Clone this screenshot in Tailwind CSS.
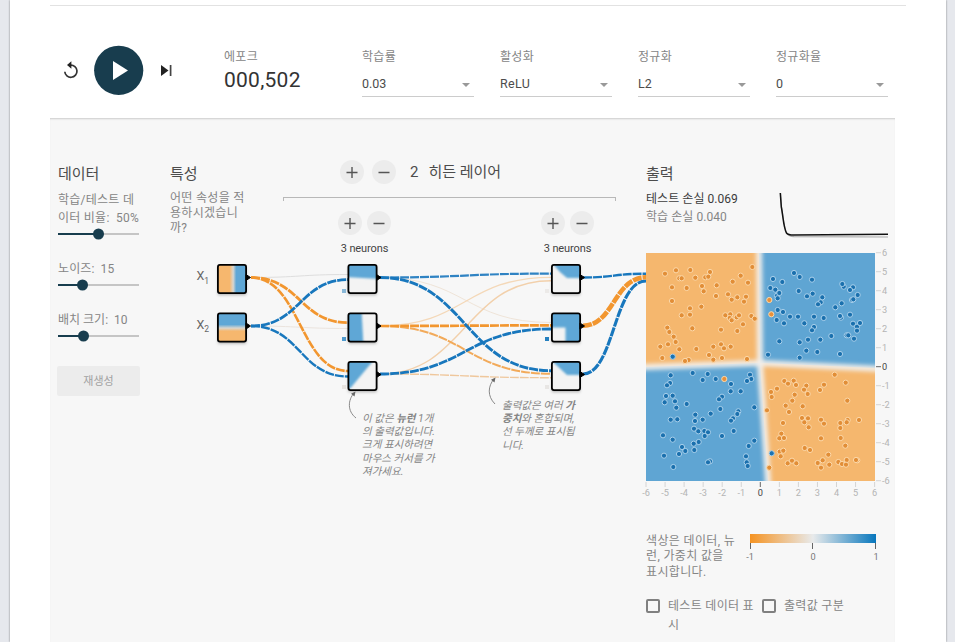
<!DOCTYPE html>
<html lang="ko">
<head>
<meta charset="utf-8">
<title>Neural Network Playground</title>
<script src="https://cdn.jsdelivr.net/npm/@tailwindcss/browser@4"></script>
</head>
<body class="h-[642px] w-[955px] overflow-hidden bg-[#e6e8ed] font-[Roboto,'Noto_Sans_CJK_KR',sans-serif] text-[12px] text-[#858585]">
<div class="ml-[10px] h-[642px] w-[936px] bg-white px-[40px] shadow-[0_0_2px_rgba(0,0,0,0.45)]">
  <div class="h-[6px] w-[856px] border-b border-[#e2e2e2]"></div>

  <header class="flex h-[112px] w-[844px] items-start">
    <div class="mt-[39px] flex h-[50px] w-[174px] items-center pl-[12px]">
      <svg class="h-[20px] w-[18px]" viewBox="0 0 18 20"><path d="M8.5 5.1A6.1 6.1 0 1 1 2.8 11.7" fill="none" stroke="#333" stroke-width="1.7"/><path d="M9.4 1.3V8.7L5 5Z" fill="#222"/></svg>
      <svg class="ml-[14px] h-[50px] w-[50px]" viewBox="0 0 50 50"><circle cx="24.700" cy="25.300" r="24.6" fill="#183d4e"/><path d="M19 16L34 25.500L19 35Z" fill="#fff"/></svg>
      <svg class="ml-[16px] h-[14px] w-[14px]" viewBox="0 0 14 14"><path d="M1 2L8.5 7.5L1 13Z" fill="#222"/><path d="M10.6 2V13" stroke="#444" stroke-width="1.7"/></svg>
    </div>
    <div class="w-[138px] pt-[42px]">
      <div class="h-[18px] leading-[18px] tracking-[0.3px]">에포크</div>
      <div class="mt-[1px] text-[21px] leading-[26px] tracking-[0.25px] text-[#333]">000,502</div>
    </div>
    <div class="flex gap-[26px] pt-[42px]">
      <div class="w-[112px]"><div class="h-[18px] leading-[18px] tracking-[0.3px]">학습률</div><div class="mt-[5px] flex h-[26px] items-center justify-between border-b border-[#ccc] pt-[2px] pr-[4px] text-[12.5px] text-[#4c4c4c]"><span>0.03</span><svg class="h-[4px] w-[8px]" viewBox="0 0 8 4"><path d="M0 0H8L4 4Z" fill="#999"/></svg></div></div>
      <div class="w-[112px]"><div class="h-[18px] leading-[18px] tracking-[0.3px]">활성화</div><div class="mt-[5px] flex h-[26px] items-center justify-between border-b border-[#ccc] pt-[2px] pr-[4px] text-[12.5px] tracking-[0.3px] text-[#4c4c4c]"><span>ReLU</span><svg class="h-[4px] w-[8px]" viewBox="0 0 8 4"><path d="M0 0H8L4 4Z" fill="#999"/></svg></div></div>
      <div class="w-[112px]"><div class="h-[18px] leading-[18px] tracking-[0.3px]">정규화</div><div class="mt-[5px] flex h-[26px] items-center justify-between border-b border-[#ccc] pt-[2px] pr-[4px] text-[12.5px] text-[#4c4c4c]"><span>L2</span><svg class="h-[4px] w-[8px]" viewBox="0 0 8 4"><path d="M0 0H8L4 4Z" fill="#999"/></svg></div></div>
      <div class="w-[112px]"><div class="h-[18px] leading-[18px] tracking-[0.3px]">정규화율</div><div class="mt-[5px] flex h-[26px] items-center justify-between border-b border-[#ccc] pt-[2px] pr-[4px] text-[12.5px] text-[#4c4c4c]"><span>0</span><svg class="h-[4px] w-[8px]" viewBox="0 0 8 4"><path d="M0 0H8L4 4Z" fill="#999"/></svg></div></div>
    </div>
  </header>

  <main class="flex h-[524px] w-[845px] bg-[#f7f7f7] pl-[8px] whitespace-nowrap shadow-[inset_0_2px_2px_-1px_rgba(0,0,0,0.18)]">
    <section class="w-[112px] pt-[45px]">
      <h2 class="h-[22px] text-[15px] leading-[22px] text-[#4c4c4c]">데이터</h2>
      <div class="mt-[6px] leading-[18px] tracking-[0.25px]">학습/테스트 데<br>이터 비율:&nbsp; 50%</div>
      <svg class="mt-[1px] block h-[12px] w-[82px]" viewBox="0 0 82 12"><path d="M0 6H81" stroke="#b5b5b5" stroke-width="1.6"/><path d="M0 6H40" stroke="#183d4e" stroke-width="2"/><circle cx="40.5" cy="6" r="5.5" fill="#183d4e"/></svg>
      <div class="mt-[20px] leading-[18px] tracking-[0.1px]">노이즈:&nbsp; 15</div>
      <svg class="mt-[1px] block h-[12px] w-[82px]" viewBox="0 0 82 12"><path d="M0 6H81" stroke="#b5b5b5" stroke-width="1.6"/><path d="M0 6H24" stroke="#183d4e" stroke-width="2"/><circle cx="24.5" cy="6" r="5.5" fill="#183d4e"/></svg>
      <div class="mt-[20px] leading-[18px]">배치 크기:&nbsp; 10</div>
      <svg class="mt-[1px] block h-[12px] w-[82px]" viewBox="0 0 82 12"><path d="M0 6H81" stroke="#b5b5b5" stroke-width="1.6"/><path d="M0 6H25" stroke="#183d4e" stroke-width="2"/><circle cx="25.5" cy="6" r="5.5" fill="#183d4e"/></svg>
      <button class="-ml-px mt-[24px] block h-[30px] w-[83px] rounded-[2px] bg-[#ececec] pt-[2px] text-[11px] text-[#a2a2a2]">재생성</button>
    </section>

    <section class="w-[476px]">
      <div class="flex h-[137px]">
        <div class="w-[113px] pt-[45px]">
          <h2 class="h-[22px] text-[15px] leading-[22px] text-[#4c4c4c]">특성</h2>
          <p class="mt-[6px] leading-[15px] tracking-[0.3px]">어떤 속성을 적<br>용하시겠습니<br>까?</p>
        </div>
        <div class="w-[333px] pt-[42px]">
          <div class="flex h-[24px] items-center pl-[57px]">
            <svg class="h-[24px] w-[24px]" viewBox="0 0 24 24"><circle cx="12" cy="12" r="12" fill="#ececec"/><path d="M6.5 12.500H17.500M12 7V18" stroke="#555" stroke-width="1.4"/></svg>
            <svg class="ml-[8px] h-[24px] w-[24px]" viewBox="0 0 24 24"><circle cx="12" cy="12" r="12" fill="#ececec"/><path d="M6.5 12.500H17.500" stroke="#555" stroke-width="1.5"/></svg>
            <span class="ml-[14px] text-[15px] text-[#4c4c4c]">2</span><span class="ml-[10px] text-[15px] text-[#4c4c4c]">히든 레이어</span>
          </div>
          <div class="mt-[13px] h-[4px] w-[333px] border-x border-t border-[#b8b8b8]"></div>
          <div class="mt-[10px] flex pl-[55px]">
            <div class="w-[53px]">
              <div class="flex gap-[5px]"><svg class="h-[24px] w-[24px]" viewBox="0 0 24 24"><circle cx="12" cy="12" r="12" fill="#ececec"/><path d="M6.5 12.5H17.5M12 7V18" stroke="#555" stroke-width="1.4"/></svg><svg class="h-[24px] w-[24px]" viewBox="0 0 24 24"><circle cx="12" cy="12" r="12" fill="#ececec"/><path d="M6.5 12.5H17.5" stroke="#555" stroke-width="1.5"/></svg></div>
              <div class="mt-[5px] text-center text-[11px] leading-[18px] tracking-[-0.1px] text-[#444]">3 neurons</div>
            </div>
            <div class="ml-[150px] w-[53px]">
              <div class="flex gap-[5px]"><svg class="h-[24px] w-[24px]" viewBox="0 0 24 24"><circle cx="12" cy="12" r="12" fill="#ececec"/><path d="M6.5 12.5H17.5M12 7V18" stroke="#555" stroke-width="1.4"/></svg><svg class="h-[24px] w-[24px]" viewBox="0 0 24 24"><circle cx="12" cy="12" r="12" fill="#ececec"/><path d="M6.5 12.5H17.5" stroke="#555" stroke-width="1.5"/></svg></div>
              <div class="mt-[5px] text-center text-[11px] leading-[18px] tracking-[-0.1px] text-[#444]">3 neurons</div>
            </div>
          </div>
        </div>
      </div>

      <svg class="block h-[144px] w-[476px] overflow-visible" viewBox="170 255 476 144">
        <defs>
          <linearGradient id="gx"><stop offset=".42" stop-color="#f6b76e"/><stop offset=".54" stop-color="#d9d6cf"/><stop offset=".64" stop-color="#5fa7d6"/></linearGradient>
          <linearGradient id="gy" x2="0" y2="1"><stop offset=".4" stop-color="#5fa7d6"/><stop offset=".52" stop-color="#d9d6cf"/><stop offset=".62" stop-color="#f6b76e"/></linearGradient>
          <filter id="soft"><feGaussianBlur stdDeviation=".9"/></filter>
          <filter id="shade" x="-30%" y="-30%" width="160%" height="170%"><feDropShadow dx="0" dy="2" stdDeviation="1.5" flood-opacity=".3"/></filter>
          <clipPath id="box"><rect x="1" y="1" width="28" height="28"/></clipPath>
        </defs>
        <g fill="none">
          <path d="M251 277.5C300 277.5 300 274.5 348 274.5" stroke="#dedede"/>
          <path d="M251 326C300 326 300 328.5 348 328.5" stroke="#ebe4de"/>
          <path d="M380 277.5C465 277.5 465 322.5 551 322.5" stroke="#efe4d8"/>
          <path d="M380 326C465 326 465 277.3 551 277.3" stroke="#f4d8b8" stroke-width="1.3"/>
          <path d="M380 374C465 374 465 280.7 551 280.7" stroke="#f2d0ab" stroke-width="1.4"/>
          <path d="M380 374C465 374 465 377.7 551 377.7" stroke="#efc79c" stroke-width="1.4" stroke-dasharray="9 1"/>
          <g stroke-dasharray="9 1">
            <path d="M251 277.5C300 277.5 300 322.7 348 322.7" stroke="#f2962f" stroke-width="2.8"/>
            <path d="M251 277.5C300 277.5 300 371 348 371" stroke="#f2962f" stroke-width="2.6"/>
            <path d="M251 326C300 326 300 279.7 348 279.7" stroke="#1877bd" stroke-width="2.8"/>
            <path d="M251 326C300 326 300 376.5 348 376.5" stroke="#1877bd" stroke-width="2.4"/>
            <path d="M380 277.5C465 277.5 465 273.6 551 273.6" stroke="#2f83c3" stroke-width="2.2"/>
            <path d="M380 326C465 326 465 373.7 551 373.7" stroke="#f2aa5a" stroke-width="2"/>
            <path d="M380 326C465 326 465 325.4 551 325.4" stroke="#f2962f" stroke-width="2.7"/>
            <path d="M380 277.5C465 277.5 465 370.7 551 370.7" stroke="#1877bd" stroke-width="2.9"/>
            <path d="M380 374C465 374 465 329 551 329" stroke="#1877bd" stroke-width="2.8"/>
            <path d="M583 277.5C614 277.5 614 273.7 646 273.7" stroke="#1877bd" stroke-width="2.4"/>
            <path d="M583 374C614 374 614 281 646 281" stroke="#1877bd" stroke-width="3.1"/>
            <path d="M583 325.7C614 325.7 614 277.3 646 277.3" stroke="#f2962f" stroke-width="4.6"/>
          </g>
        </g>
        <g fill="#666" font-size="12.500"><text x="196.500" y="280">X<tspan font-size="8.5" dy="3.5">1</tspan></text><text x="196.500" y="328.500">X<tspan font-size="8.5" dy="3">2</tspan></text></g>
        <g fill="#8ab8d8"><rect x="342" y="289" width="4" height="4"/><rect x="342" y="337" width="4" height="4" fill="#4f9bcf"/><rect x="342" y="385" width="4" height="4" fill="#e8e4e0"/><rect x="545" y="289" width="4" height="4" fill="#eceae8"/><rect x="545" y="337" width="4" height="4" fill="#2580bf"/><rect x="545" y="385" width="4" height="4" fill="#e8e6e4"/></g>
        <g id="nodes"></g>
        <g fill="none" stroke="#888" stroke-width="1"><path d="M356 418C347 411 348 400 354 393"/><path d="M495 404C487 396 488 386 494 379"/></g>
        <path d="M355.5 391.5L354.5 396.5L351 393.8ZM495.5 377.5L494.5 382.5L491 379.8Z" fill="#666"/>
      </svg>

      <div class="flex pl-[192px] text-[10.5px] leading-[13.2px] text-[#858585] italic">
        <p class="mt-[13px] w-[140px]">이 값은 <b class="font-bold">뉴런</b> 1개<br>의 출력값입니다.<br>크게 표시하려면<br>마우스 커서를 가<br>져가세요.</p>
        <p>출력값은 여러 <b class="font-bold">가</b><br><b class="font-bold">중치</b>와 혼합되며,<br>선 두께로 표시됩<br>니다.</p>
      </div>
    </section>

    <section class="w-[249px] pt-[45px]">
      <h2 class="h-[22px] text-[15px] leading-[22px] text-[#4c4c4c]">출력</h2>
      <div class="flex h-[62px] pt-[6px]">
        <div class="w-[132px] leading-[17.5px] tracking-[0.05px]"><div class="text-[#3c3c3c]">테스트 손실 0.069</div><div>학습 손실 0.040</div></div>
        <svg class="h-[50px] w-[112px]" viewBox="778 191 112 50" fill="none"><path d="M780.5 193L781.5 207C783 215 784 229 787 233.500Q789 236.500 794 236.700L888 237" stroke="#aaa" stroke-width="1.2"/><path d="M780.300 193L781.300 207C783 215 783.500 228 786.500 233Q788 235.200 794 235.100L888 234.300" stroke="#111" stroke-width="1.5"/></svg>
      </div>
      <svg class="mt-[6px] block h-[248px] w-[249px] overflow-visible" viewBox="646 253 249 248">
        <defs><filter id="blur" filterUnits="userSpaceOnUse" x="600" y="200" width="320" height="330"><feGaussianBlur stdDeviation="2.2"/></filter><clipPath id="plot"><rect x="646" y="253" width="229" height="228"/></clipPath></defs>
        <g clip-path="url(#plot)">
          <path d="M646 253H875V481H646Z" fill="#f5b76e"/>
          <path d="M759 253H875V368L760 363ZM646 367L760 363L768 481H646Z" fill="#5fa5d3"/>
          <path d="M759 240L760 363L769 495M630 367.500L760 363L890 369.500" fill="none" stroke="#f1eeea" stroke-width="6" filter="url(#blur)"/>
        </g>
        <g id="dots"></g>
        <g id="axes" font-size="9.2" stroke-width="1"></g>
      </svg>
      <div class="mt-[31px] flex">
        <p class="w-[103px] pt-[2px] leading-[15.3px] tracking-[0.35px]">색상은 데이터, 뉴<br>런, 가중치 값을<br>표시합니다.</p>
        <svg class="h-[32px] w-[136px] overflow-visible" viewBox="749 532 136 32"><defs><linearGradient id="scale"><stop stop-color="#f59322"/><stop offset=".5" stop-color="#e8eaeb"/><stop offset="1" stop-color="#0877bd"/></linearGradient></defs><rect x="750" y="534" width="126" height="9" fill="url(#scale)"/><path d="M750.500 543V549M812.500 543V549M875.500 543V549" stroke="#666"/><g font-size="9.200" fill="#777" text-anchor="middle"><text x="750" y="560">-1</text><text x="813" y="560">0</text><text x="876" y="560">1</text></g></svg>
      </div>
      <div class="mt-[17px] flex leading-[19px] tracking-[0.3px]">
        <div class="mt-[2px] h-[14px] w-[14px] rounded-[2px] border-2 border-[#808080]"></div>
        <div class="ml-[8px] w-[94px]">테스트 데이터 표<br>시</div>
        <div class="mt-[2px] h-[14px] w-[14px] rounded-[2px] border-2 border-[#808080]"></div>
        <div class="ml-[8px]">출력값 구분</div>
      </div>
    </section>
  </main>
</div>
<script>
const blue = '#5fa7d6', pale = '#f3f3f3';
const nodes = [
  [217, 264, '<rect width="30" height="30" fill="url(#gx)"/>'],
  [217, 312.5, '<rect width="30" height="30" fill="url(#gy)"/>'],
  [347.5, 264, '<path filter="url(#soft)" d="M-3-3H33V15L-3 13Z" fill="' + blue + '"/>'],
  [347.5, 312.5, '<path filter="url(#soft)" d="M-3-3H14L16 33H-3Z" fill="' + blue + '"/>'],
  [347.5, 361, '<path filter="url(#soft)" d="M-3-3H28L3 27L-3 30Z" fill="' + blue + '"/>'],
  [551, 264, '<path filter="url(#soft)" d="M2-3H33V14H16Q8 8 2 0Z" fill="' + blue + '"/>'],
  [551, 312.5, '<path filter="url(#soft)" d="M-3-3H33V33H14.500V15H-3Z" fill="' + blue + '"/>'],
  [551, 361, '<path filter="url(#soft)" d="M2-3H33V14H16L2 1Z" fill="' + blue + '"/>']
];
document.getElementById('nodes').innerHTML = nodes.map(([x, y, art]) =>
  `<g transform="translate(${x} ${y})"><rect x="1" y="1" width="28" height="28" fill="${pale}" filter="url(#shade)"/><g clip-path="url(#box)">${art}</g><rect x=".9" y=".9" width="28.2" height="28.200" rx="2" fill="none" stroke="#000" stroke-width="1.800"/><path d="M29 10.500L33.500 13.500L29 16.500Z" fill="#000" stroke="#000"/></g>`).join('');

// Each group: origin, fill, halo, points in thirds of a pixel.
const groups = [
  [640, 245, '#e28e37', '#fcd9ab', [[75,86],[108,76],[151,75],[118,100],[125,100],[166,98],[196,97],[210,81],[205,95],[337,66],[302,92],[278,110],[324,113],[96,127],[140,129],[186,123],[191,139],[230,121],[228,153],[264,148],[275,164],[292,157],[318,155],[312,170],[96,168],[150,190],[184,185],[125,211],[150,209],[256,211],[271,208],[269,219],[275,226],[290,217],[297,211],[334,213],[344,221],[309,238],[292,258],[243,254],[157,250],[82,248],[88,261],[101,275],[107,291],[84,298],[61,305],[118,313],[169,312],[220,305],[243,298],[252,310],[272,305],[207,330],[220,344],[246,339],[321,342],[67,339],[146,345],[135,348]]],
  [640, 245, '#1a72b2', '#a9d0eb', [[98,335]]],
  [755, 245, '#1a70ae', '#a9d0eb', [[117,84],[134,96],[54,102],[82,111],[171,104],[46,129],[61,134],[66,152],[73,144],[68,160],[131,138],[156,154],[173,146],[202,157],[197,172],[189,178],[266,125],[262,117],[294,127],[285,135],[308,150],[291,165],[295,163],[260,175],[241,187],[68,195],[84,201],[65,225],[87,235],[105,215],[129,215],[177,215],[206,219],[148,235],[177,246],[171,256],[258,218],[255,213],[285,209],[294,236],[306,245],[315,234],[306,257],[275,271],[280,271],[297,281],[229,273],[196,284],[159,284],[134,292],[73,289],[154,317],[187,321],[255,327],[134,338],[39,329]]],
  [755, 245, '#e9903a', '#fcd9ab', [[43,165],[49,208]]],
  [640, 360, '#1a70ae', '#a9d0eb', [[92,46],[158,39],[203,42],[188,60],[227,57],[330,44],[334,57],[321,63],[273,72],[90,69],[81,76],[272,94],[302,94],[78,108],[98,107],[74,127],[105,124],[109,143],[140,132],[246,110],[237,118],[343,142],[241,147],[295,154],[292,162],[279,175],[273,182],[166,164],[212,161],[165,183],[188,179],[92,179],[112,178],[162,206],[175,214],[193,213],[204,217],[194,228],[281,213],[246,228],[69,226],[98,239],[176,246],[161,251],[163,270],[126,261],[136,273],[117,282],[72,287],[100,321],[210,304],[204,307],[343,242],[326,258],[318,289],[320,307],[323,318]]],
  [640, 360, '#e9903a', '#fcd9ab', [[253,57]]],
  [755, 360, '#e28e37', '#fcd9ab', [[239,44],[272,68],[88,63],[99,71],[116,62],[123,75],[154,77],[147,89],[158,102],[207,74],[195,90],[66,86],[48,96],[50,111],[119,104],[112,122],[92,137],[143,139],[102,156],[36,151],[277,122],[84,189],[141,174],[159,175],[148,187],[161,202],[198,179],[207,191],[256,189],[278,180],[275,187],[312,180],[256,204],[79,221],[73,235],[87,234],[198,235],[257,234],[271,257],[74,275],[85,272],[77,289],[149,264],[165,270],[220,284],[98,310],[111,302],[124,310],[188,309],[203,301],[223,314],[198,323],[250,306],[275,300],[261,312],[273,314],[307,301],[303,300],[43,323]]],
  [755, 360, '#1a72b2', '#a9d0eb', [[50,280]]]
];
document.getElementById('dots').innerHTML = groups.map(([ox, oy, fill, halo, pts]) =>
  `<g fill="${fill}" stroke="${halo}" stroke-width="1">` + pts.map(([x, y]) => `<circle cx="${(ox + x / 3).toFixed(1)}" cy="${(oy + y / 3).toFixed(1)}" r="2.600"/>`).join('') + '</g>').join('');

let axes = '';
for (let v = -6; v <= 6; v++) {
  const x = 760.3 + v * 19.05, y = 366.7 - v * 19, c = v ? '#b4b4b4' : '#444', s = v ? '#d4d4d4' : '#666';
  axes += `<path d="M${x} 482V487M876 ${y}H881" stroke="${s}"/><text x="${x}" y="495.500" text-anchor="middle" fill="${c}">${v}</text><text x="882" y="${y + 3}" fill="${c}">${v}</text>`;
}
document.getElementById('axes').innerHTML = axes;
</script>
</body>
</html>
